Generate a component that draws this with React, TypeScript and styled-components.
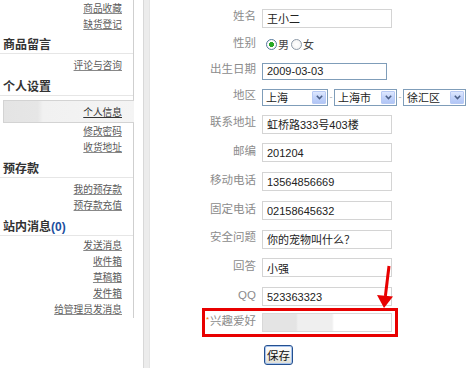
import React from "react";
import styled, { createGlobalStyle } from "styled-components";

const Global = createGlobalStyle`
  html, body { margin: 0; padding: 0; background: #fff; }
  body {
    font-family: "Liberation Sans", "Noto Sans CJK SC", sans-serif;
    overflow: hidden;
  }
`;

const Page = styled.div`
  display: flex;
  width: 468px;
  height: 368px;
  overflow: hidden;
`;

/* ---------- sidebar ---------- */
const Sidebar = styled.nav`
  width: 134px;
  box-sizing: border-box;
  align-self: flex-start;
  border-right: 1px solid #cfcfcf;
  padding-bottom: 1px;
`;

const LinkList = styled.div<{ $pt?: number; $pb?: number }>`
  display: flex;
  flex-direction: column;
  align-items: flex-end;
  padding: ${(p) => p.$pt ?? 3}px 11px ${(p) => p.$pb ?? 3}px 0;
`;

const SideLink = styled.a`
  font-family: "Noto Sans CJK SC", sans-serif;
  font-size: 9.7px;
  line-height: 16px;
  height: 16px;
  color: #5a5a5a;
  text-decoration: underline;
  text-decoration-color: #888;
  white-space: nowrap;
`;

const ActiveItem = styled.a`
  align-self: stretch;
  margin: 1px -12px 0 3px;
  height: 23px;
  box-sizing: border-box;
  border: 1px solid #d3d3d3;
  border-right: none;
  background: linear-gradient(
    to right,
    #e4e4e4 0,
    #e6e6e6 26%,
    #f1f1f1 30%,
    #f4f4f4 100%
  );
  display: flex;
  align-items: center;
  justify-content: flex-end;
  padding-right: 12px;
  font-family: "Noto Sans CJK SC", sans-serif;
  font-size: 9.7px;
  color: #333;
  text-decoration: underline;
`;

const SectionHeader = styled.div`
  height: 19px;
  line-height: 19px;
  padding-left: 3px;
  border-bottom: 1px solid #e6e6e6;
  font-family: "Noto Sans CJK SC", sans-serif;
  font-size: 12px;
  font-weight: 700;
  color: #333;
`;

const Count = styled.span`
  font-family: "Liberation Sans", sans-serif;
  color: #1d4f9e;
  font-weight: 700;
`;

const Spacer = styled.div`
  width: 9px;
`;

const Rail = styled.div`
  width: 7px;
  box-sizing: border-box;
  background: #ececec;
  border-left: 1px solid #d8d8d8;
  border-right: 1px solid #e4e4e4;
`;

/* ---------- form ---------- */
const Main = styled.main`
  position: relative;
  flex: 1;
  padding-top: 4px;
`;

const Row = styled.div<{ $h: number }>`
  display: grid;
  grid-template-columns: 106px auto;
  column-gap: 6px;
  align-items: center;
  justify-content: start;
  height: ${(p) => p.$h}px;
`;

const Label = styled.label`
  text-align: right;
  font-size: 11.5px;
  line-height: 16px;
  color: #8c8c8c;
  padding-bottom: 4px;
  white-space: nowrap;
`;

const Star = styled.span`
  color: #f07000;
  font-size: 8px;
  vertical-align: 3px;
  margin-right: 1px;
`;

const TextBox = styled.input<{ $w?: number; $h?: number; $blue?: boolean }>`
  width: ${(p) => p.$w ?? 130}px;
  height: ${(p) => p.$h ?? 19}px;
  box-sizing: border-box;
  margin: 0;
  border: 1px solid ${(p) => (p.$blue ? "#7f9db9" : "#d4d4d4")};
  padding: 0 0 0 4px;
  font-family: "Liberation Sans", "Noto Sans CJK SC", sans-serif;
  font-size: 11px;
  color: #222;
  background: #fff;
  outline: none;
`;

const BlurredBox = styled.div`
  width: 130px;
  height: 19px;
  box-sizing: border-box;
  border: 1px solid #d8d8d8;
  background: linear-gradient(
    to right,
    #e4e4e4 0,
    #e4e4e4 33px,
    #efefef 35px,
    #efefef 69px,
    #fff 71px
  );
`;

const Radios = styled.div`
  display: flex;
  align-items: center;
  padding-left: 4px;
  font-family: "Noto Sans CJK SC", sans-serif;
  font-size: 11px;
  color: #444;
  padding-bottom: 2px;
`;

const RadioDot = styled.span<{ $on?: boolean }>`
  width: 11px;
  height: 11px;
  box-sizing: border-box;
  border-radius: 50%;
  border: 1px solid ${(p) => (p.$on ? "#55789c" : "#8d9aa8")};
  background: ${(p) =>
    p.$on
      ? "radial-gradient(circle, #27a827 0, #27a827 2.3px, #fff 2.8px, #f0f0f0 100%)"
      : "radial-gradient(circle, #fff 0, #f6f6f6 60%, #e2e2e2 100%)"};
  margin-right: 1px;
`;

const RadioText = styled.span`
  margin-right: 2px;
`;

const Region = styled.div`
  display: flex;
  align-items: center;
`;

const Select = styled.div<{ $w: number }>`
  width: ${(p) => p.$w}px;
  height: 17px;
  box-sizing: border-box;
  border: 1px solid #7f9db9;
  background: #fff;
  display: flex;
  align-items: center;
  justify-content: space-between;
  padding-left: 3px;
  font-family: "Noto Sans CJK SC", sans-serif;
  font-size: 11px;
  color: #222;
`;

const SelectButton = styled.span`
  width: 14px;
  height: 13px;
  box-sizing: border-box;
  margin-right: 1px;
  border: 1px solid #b7c9f4;
  border-radius: 1px;
  background: linear-gradient(#dfe8fe, #c2d3fa 50%, #b2c6f6);
  display: flex;
  align-items: center;
  justify-content: center;
`;

const Dash = styled.span`
  width: 6px;
  text-align: center;
  font-size: 9px;
  color: #aaa;
`;

const SaveButton = styled.button`
  margin-left: 2px;
  width: 29px;
  height: 20px;
  box-sizing: border-box;
  padding: 0;
  border: 1px solid #24508f;
  border-radius: 3px;
  background: linear-gradient(#fefefe, #f0f0ea 60%, #dedcd2);
  box-shadow: inset 0 0 0 1px #a8c4ee;
  font-family: "Noto Sans CJK SC", sans-serif;
  font-size: 11.5px;
  color: #111;
`;

const Highlight = styled.div`
  position: absolute;
  left: 52px;
  top: 308px;
  width: 196px;
  height: 29px;
  box-sizing: border-box;
  border: 3px solid #e80000;
  pointer-events: none;
`;

const ArrowSvg = styled.svg`
  position: absolute;
  left: 220px;
  top: 260px;
  width: 30px;
  height: 50px;
`;

const Chevron = () => (
  <svg width="7" height="5" viewBox="0 0 7 5">
    <path d="M0.8 0.8 L3.5 3.6 L6.2 0.8" fill="none" stroke="#4c5f86" strokeWidth="1.5" />
  </svg>
);

const DropDown = ({ w, text }: { w: number; text: string }) => (
  <Select $w={w}>
    <span>{text}</span>
    <SelectButton>
      <Chevron />
    </SelectButton>
  </Select>
);

const fields: { label: string; value: string; h: number }[] = [
  { label: "联系地址", value: "虹桥路333号403楼", h: 28 },
  { label: "邮编", value: "201204", h: 29 },
  { label: "移动电话", value: "13564856669", h: 29 },
  { label: "固定电话", value: "02158645632", h: 29 },
  { label: "安全问题", value: "你的宠物叫什么？", h: 28 },
  { label: "回答", value: "小强", h: 29 },
  { label: "QQ", value: "523363323", h: 29 },
];

export default function App() {
  return (
    <>
      <Global />
      <Page>
        <Sidebar>
          <LinkList $pt={0} $pb={2}>
            <SideLink>商品收藏</SideLink>
            <SideLink>缺货登记</SideLink>
          </LinkList>
          <SectionHeader>商品留言</SectionHeader>
          <LinkList>
            <SideLink>评论与咨询</SideLink>
          </LinkList>
          <SectionHeader>个人设置</SectionHeader>
          <LinkList>
            <ActiveItem>个人信息</ActiveItem>
            <SideLink>修改密码</SideLink>
            <SideLink>收货地址</SideLink>
          </LinkList>
          <SectionHeader>预存款</SectionHeader>
          <LinkList>
            <SideLink>我的预存款</SideLink>
            <SideLink>预存款充值</SideLink>
          </LinkList>
          <SectionHeader>
            站内消息<Count>(0)</Count>
          </SectionHeader>
          <LinkList $pt={1} $pb={0}>
            <SideLink>发送消息</SideLink>
            <SideLink>收件箱</SideLink>
            <SideLink>草稿箱</SideLink>
            <SideLink>发件箱</SideLink>
            <SideLink>给管理员发消息</SideLink>
          </LinkList>
        </Sidebar>
        <Spacer />
        <Rail />
        <Main>
          <Row $h={28}>
            <Label>姓名</Label>
            <TextBox readOnly value="王小二" />
          </Row>
          <Row $h={26}>
            <Label>性别</Label>
            <Radios>
              <RadioDot $on />
              <RadioText>男</RadioText>
              <RadioDot />
              <RadioText>女</RadioText>
            </Radios>
          </Row>
          <Row $h={26}>
            <Label>出生日期</Label>
            <TextBox readOnly value="2009-03-03" $w={125} $h={17} $blue />
          </Row>
          <Row $h={26}>
            <Label>地区</Label>
            <Region>
              <DropDown w={66} text="上海" />
              <Dash>-</Dash>
              <DropDown w={63} text="上海市" />
              <Dash>-</Dash>
              <DropDown w={63} text="徐汇区" />
            </Region>
          </Row>
          {fields.map((f) => (
            <Row key={f.label} $h={f.h}>
              <Label>{f.label}</Label>
              <TextBox readOnly value={f.value} />
            </Row>
          ))}
          <Row $h={23}>
            <Label>
              <Star>*</Star>兴趣爱好
            </Label>
            <BlurredBox />
          </Row>
          <Row $h={42}>
            <span />
            <SaveButton>保存</SaveButton>
          </Row>
          <Highlight />
          <ArrowSvg viewBox="0 0 30 50">
            <line x1="19" y1="6" x2="15.4" y2="36" stroke="#e80000" strokeWidth="3" />
            <polygon points="7,35 23,36.5 14,48" fill="#e80000" />
          </ArrowSvg>
        </Main>
      </Page>
    </>
  );
}
